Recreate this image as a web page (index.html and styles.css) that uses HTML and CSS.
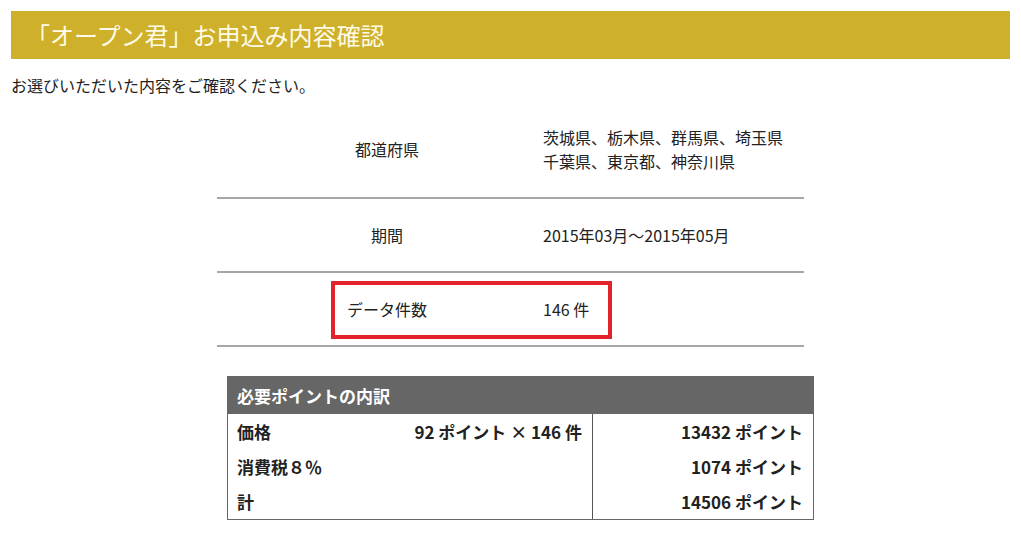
FILE: index.html
```html
<!DOCTYPE html>
<html lang="ja">
<head>
  <meta charset="UTF-8" />
  <title>「オープン君」お申込み内容確認</title>
  <link rel="stylesheet" href="styles.css">
</head>
<body>
  <div class="page">
    <h1 class="page-title">「オープン君」お申込み内容確認</h1>
    <p class="lead">お選びいただいた内容をご確認ください。</p>

    <div class="summary">
      <div class="summary-row">
        <div class="summary-label">都道府県</div>
        <div class="summary-value">茨城県、栃木県、群馬県、埼玉県<br>千葉県、東京都、神奈川県</div>
      </div>
      <div class="summary-row">
        <div class="summary-label">期間</div>
        <div class="summary-value">2015年03月～2015年05月</div>
      </div>
      <div class="summary-row highlight">
        <div class="summary-label">データ件数</div>
        <div class="summary-value">146 件</div>
      </div>
    </div>

    <div class="points">
      <div class="points-head">必要ポイントの内訳</div>
      <div class="points-body">
        <div class="points-left">
          <div class="points-line"><span>価格</span><span>92 ポイント × 146 件</span></div>
          <div class="points-line"><span>消費税８％</span></div>
          <div class="points-line"><span>計</span></div>
        </div>
        <div class="points-right">
          <div class="points-line">13432 ポイント</div>
          <div class="points-line">1074 ポイント</div>
          <div class="points-line">14506 ポイント</div>
        </div>
      </div>
    </div>
  </div>
</body>
</html>
```

FILE: styles.css
```css
:root {
  --gold: #ceb02a;
  --title-text: #fffbe8;
  --text-color: #222;
  --rule: #a6a6a6;
  --box-gray: #666;
  --mark-red: #e3232b;
}

*,
*::before,
*::after {
  margin: 0;
  padding: 0;
  box-sizing: border-box;
}

body {
  font-family: "Noto Sans CJK JP", "Noto Sans", sans-serif;
  color: var(--text-color);
  background: #fff;
}

.page {
  padding: 11px;
}

.page-title {
  background: var(--gold);
  color: var(--title-text);
  font-size: 24px;
  font-weight: normal;
  height: 48px;
  line-height: 48px;
  padding-left: 15px;
}

.lead {
  font-size: 16px;
  line-height: 24px;
  margin-top: 14px;
}

.summary {
  width: 587px;
  margin: 4px 0 0 206px;
}

.summary-row {
  display: grid;
  grid-template-columns: 326px 1fr;
  align-items: center;
  padding: 24px 0;
  font-size: 16px;
  line-height: 24px;
  border-bottom: 2px solid var(--rule);
  position: relative;
}

.summary-label {
  text-align: center;
  padding-left: 14px;
}

/* annotation box round the data count */
.highlight::after {
  content: "";
  position: absolute;
  left: 114px;
  top: 8px;
  width: 281px;
  height: 58px;
  border: 4px solid var(--mark-red);
}

.points {
  width: 587px;
  margin: 29px 0 0 216px;
  border: 1px solid var(--box-gray);
  font-weight: bold;
  font-size: 17px;
}

.points-head {
  background: var(--box-gray);
  color: #fff;
  height: 37px;
  line-height: 37px;
  padding-left: 9px;
}

.points-body {
  display: grid;
  grid-template-columns: 365px 1fr;
}

.points-left {
  border-right: 1px solid #555;
}

.points-line {
  height: 35px;
  line-height: 35px;
  padding: 0 10px 0 9px;
  display: flex;
  justify-content: space-between;
}

.points-right .points-line {
  justify-content: flex-end;
}
```
